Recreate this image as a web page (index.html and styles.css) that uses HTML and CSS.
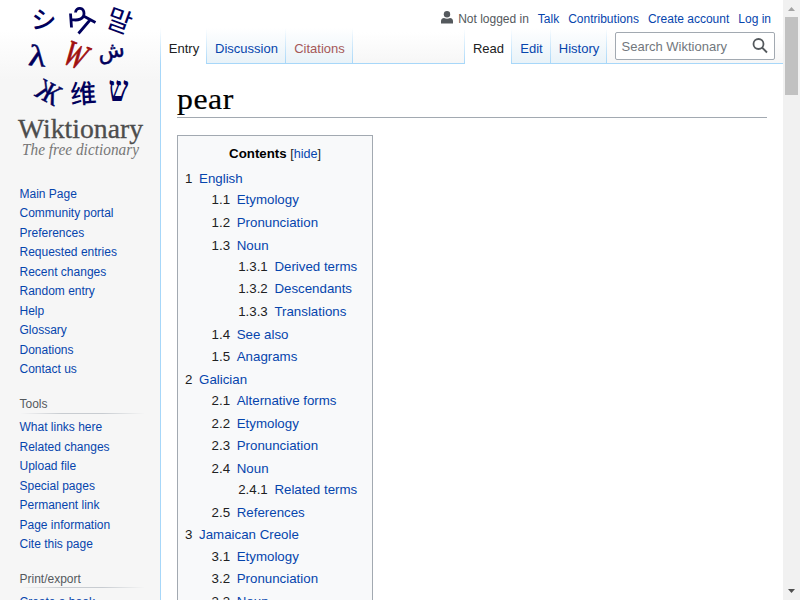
FILE: index.html
```html
<!DOCTYPE html>
<html lang="en">
<head>
<meta charset="utf-8">
<title>pear - Wiktionary</title>
<link rel="stylesheet" href="styles.css">
</head>
<body>
<div class="window">
  <aside class="sidebar">
    <a class="logo">
      <svg width="160" height="166" viewBox="0 0 160 166">
        <g class="tiles" text-anchor="middle">
          <text class="cjk" transform="translate(43 29) rotate(5)" font-size="25">シ</text>
          <path class="sha" d="M70.500 13.500L71.500 27.500M71.500 19.500C78 21 84 19 84 13.500C84 7 76 6.500 75.500 12.500M83.500 16L95.500 22.500M90 20L78.500 33.500"/>
          <text class="kr" transform="translate(116 30) rotate(20)" font-size="27">말</text>
          <text class="thin" transform="translate(36.500 66) rotate(6) scale(1.200 1)" font-size="30">λ</text>
          <text class="serif red" transform="translate(71 66) rotate(22) scale(.9 1.250)" font-size="29">W</text>
          <text class="arab" transform="translate(112 58) rotate(-8)" font-size="22">ش</text>
          <text class="thin" transform="translate(44 101) rotate(28) scale(.86 1)" font-size="30">Ж</text>
          <text class="cjk" transform="translate(84 103) rotate(-4)" font-size="26">维</text>
          <text class="hebrew" transform="translate(118.500 101) scale(1 1.280)" font-size="28">ש</text>
        </g>
        <text class="wordmark" x="18" y="138" textLength="125" lengthAdjust="spacingAndGlyphs">Wiktionary</text>
        <text class="tagline" x="22" y="155" textLength="117" lengthAdjust="spacingAndGlyphs">The free dictionary</text>
      </svg>
    </a>
    <nav class="portal first">
      <ul>
        <li><a>Main Page</a></li><li><a>Community portal</a></li><li><a>Preferences</a></li><li><a>Requested entries</a></li><li><a>Recent changes</a></li><li><a>Random entry</a></li><li><a>Help</a></li><li><a>Glossary</a></li><li><a>Donations</a></li><li><a>Contact us</a></li>
      </ul>
    </nav>
    <nav class="portal">
      <h3>Tools</h3>
      <ul>
        <li><a>What links here</a></li><li><a>Related changes</a></li><li><a>Upload file</a></li><li><a>Special pages</a></li><li><a>Permanent link</a></li><li><a>Page information</a></li><li><a>Cite this page</a></li>
      </ul>
    </nav>
    <nav class="portal">
      <h3>Print/export</h3>
      <ul><li><a>Create a book</a></li></ul>
    </nav>
  </aside>
  <div class="main">
    <header class="head">
      <div class="personal">
        <svg class="user" width="12" height="13" viewBox="0 0 12 13"><circle cx="6" cy="3.200" r="3.200"/><path d="M0 12.500V10C0 8 1.500 7 3 7c1.800 1 4.200 1 6 0 1.500 0 3 1 3 3v2.500z"/></svg>
        <span>Not logged in</span><a>Talk</a><a>Contributions</a><a>Create account</a><a>Log in</a>
      </div>
      <div class="bar">
        <div class="tabs left">
          <a class="tab on entry">Entry</a><a class="tab disc">Discussion</a><a class="tab new cit">Citations</a>
        </div>
        <div class="tabs right">
          <a class="tab on read">Read</a><a class="tab edit">Edit</a><a class="tab hist">History</a>
        </div>
        <div class="search"><span>Search Wiktionary</span>
          <svg width="16" height="16" viewBox="0 0 16 16"><circle cx="6.500" cy="6" r="5" /><path d="M10 9.500L15 14.500"/></svg>
        </div>
      </div>
    </header>
    <main class="content">
      <h1><span>pear</span></h1>
      <div class="toc">
        <div class="toctitle"><b>Contents</b> [<a>hide</a>]</div>
        <ul>
          <li><i>1</i><a>English</a>
            <ul>
              <li><i>1.1</i><a>Etymology</a></li>
              <li><i>1.2</i><a>Pronunciation</a></li>
              <li><i>1.3</i><a>Noun</a>
                <ul>
                  <li><i>1.3.1</i><a>Derived terms</a></li>
                  <li><i>1.3.2</i><a>Descendants</a></li>
                  <li><i>1.3.3</i><a>Translations</a></li>
                </ul>
              </li>
              <li><i>1.4</i><a>See also</a></li>
              <li><i>1.5</i><a>Anagrams</a></li>
            </ul>
          </li>
          <li><i>2</i><a>Galician</a>
            <ul>
              <li><i>2.1</i><a>Alternative forms</a></li>
              <li><i>2.2</i><a>Etymology</a></li>
              <li><i>2.3</i><a>Pronunciation</a></li>
              <li><i>2.4</i><a>Noun</a>
                <ul>
                  <li><i>2.4.1</i><a>Related terms</a></li>
                </ul>
              </li>
              <li><i>2.5</i><a>References</a></li>
            </ul>
          </li>
          <li><i>3</i><a>Jamaican Creole</a>
            <ul>
              <li><i>3.1</i><a>Etymology</a></li>
              <li><i>3.2</i><a>Pronunciation</a></li>
              <li><i>3.3</i><a>Noun</a></li>
            </ul>
          </li>
        </ul>
      </div>
    </main>
  </div>
  <div class="scrollbar">
    <svg width="17" height="17" viewBox="0 0 17 17"><path d="M5 11h7L8.500 7z" fill="#a3a3a3"/></svg>
    <div class="thumb"></div>
    <svg class="down" width="17" height="17" viewBox="0 0 17 17"><path d="M5 6h7L8.500 10z" fill="#505050"/></svg>
  </div>
</div>
</body>
</html>
```
FILE: styles.css
```css
* { box-sizing: border-box; }
body {
  margin: 0;
  overflow: hidden;
  font-family: "Liberation Sans", Arial, sans-serif;
  color: #202122;
  background: #fff;
}
ul { list-style: none; margin: 0; padding: 0; }
a { color: #0645ad; text-decoration: none; }
.window {
  display: grid;
  grid-template-columns: 160px 623px 17px;
  height: 600px;
  overflow: hidden;
}
.sidebar {
  height: 600px;
  overflow: hidden;
  background: linear-gradient(#fff 30px, #f6f6f6 80px);
}
.logo { display: block; height: 166px; }
.logo svg { display: block; }
.tiles { fill: #00005c; }
.tiles .red { fill: #a01010; font-style: italic; font-weight: 400; stroke: #a01010; stroke-width: .7px; }
.sha { fill: none; stroke: #00005c; stroke-width: 2.8; }
.cjk { font-family: "Noto Sans CJK SC", sans-serif; font-weight: 500; }
.kr { font-family: "Noto Sans CJK KR", sans-serif; }
.serif { font-family: "Liberation Serif", serif; font-weight: 700; }
.thin { font-family: "Liberation Serif", serif; stroke: #00005c; stroke-width: .5px; }
.arab { font-family: "DejaVu Sans", sans-serif; stroke: #00005c; stroke-width: .5px; }
.hebrew { font-family: "Liberation Serif", serif; font-weight: 700; }
.wordmark { font: 27px "Liberation Serif", serif; fill: #4d4d4d; stroke: #4d4d4d; stroke-width: .3px; }
.tagline { font: italic 17.500px "Liberation Serif", serif; fill: #777; }
.portal { padding: 0 15px 0 19.500px; margin-bottom: 15px; font-size: 12px; }
.portal.first { padding-top: 18.500px; margin-bottom: 15.500px; }
.portal li { line-height: 13.500px; padding: 3px 0; white-space: nowrap; }
.portal h3 {
  margin: 0 0 4.500px;
  padding: 4px 0;
  height: 18.500px;
  font-size: 12px;
  font-weight: 400;
  line-height: 11px;
  color: #54595d;
  background: linear-gradient(to right, rgba(200,204,209,0), #c8ccd1 33%, #c8ccd1 66%, rgba(200,204,209,0)) bottom / 100% 1px no-repeat;
}
.main { min-width: 0; }
.head {
  height: 64px;
  background: linear-gradient(#fff 50%, #f6f6f6);
}
.personal {
  display: flex;
  height: 28px;
  padding: 10px 12px 0 0;
  justify-content: flex-end;
  font-size: 12px;
  line-height: 18px;
  color: #54595d;
}
.personal a { margin-left: 9px; }
.user { fill: #54595d; margin-right: 5.500px; margin-top: 1px; }
.bar {
  display: flex;
  height: 36px;
  border-bottom: 1px solid #a7d7f9;
}
.tabs { display: flex; height: 36px; }
.tabs.right { margin-left: auto; }
.tab {
  height: 36px;
  padding-top: 13px;
  text-align: center;
  font-size: 13px;
  line-height: 15px;
  white-space: nowrap;
  background:
    linear-gradient(rgba(167,215,249,0), #a7d7f9) right / 1px 100% no-repeat,
    linear-gradient(#a7d7f9, #a7d7f9) bottom / 100% 1px no-repeat,
    linear-gradient(#fff, #e8f2f8);
}
.tab.on {
  color: #202122;
  background:
    linear-gradient(rgba(167,215,249,0), #a7d7f9) left / 1px 100% no-repeat,
    linear-gradient(rgba(167,215,249,0), #a7d7f9) right / 1px 100% no-repeat,
    #fff;
}
.tab.new { color: #a55858; }
.entry { width: 47px; padding-left: 1px; }
.disc { width: 79px; }
.cit { width: 67px; }
.read { width: 48px; padding-left: 1px; }
.edit { width: 39px; }
.hist { width: 56px; }
.search {
  display: flex;
  justify-content: space-between;
  width: 160px;
  height: 28px;
  margin: 4px 8px 0 8px;
  padding: 5px 6px 5px 5.500px;
  border: 1px solid #a2a9b1;
  border-radius: 2px;
  background: #fff;
  font-size: 13px;
  line-height: 17px;
  color: #72777d;
}
.search svg { fill: none; stroke: #54595d; stroke-width: 1.8; }
.content {
  height: 536px;
  overflow: hidden;
  padding: 17px 16px 0;
  border-left: 1px solid #a7d7f9;
}
h1 {
  margin: 0;
  height: 37px;
  border-bottom: 1px solid #a2a9b1;
  font: 30px/35px "Liberation Serif", serif;
  color: #000;
}
h1 span {
  display: inline-block;
  letter-spacing: .5px;
  transform: scaleX(1.060);
  transform-origin: left;
  -webkit-text-stroke: .2px #000;
}
.toc {
  width: 196px;
  height: 500px;
  margin-top: 17px;
  padding: 7px;
  border: 1px solid #a2a9b1;
  background: #f8f9fa;
  font-size: 13.300px;
  line-height: 21.280px;
}
.toctitle { text-align: center; font-size: 12.600px; line-height: 21px; }
.toctitle b { color: #000; font-size: 13.300px; }
.toc > ul { margin-top: 3px; }
.toc li { margin-bottom: 1.330px; white-space: nowrap; }
.toc li ul { margin-left: 26.600px; }
.toc i { font-style: normal; padding-right: 6.650px; }
.scrollbar {
  display: flex;
  flex-direction: column;
  height: 600px;
  background: #f1f1f1;
}
.thumb { width: 13px; height: 78px; margin-left: 2px; background: #c1c1c1; }
.down { margin-top: auto; }
```
